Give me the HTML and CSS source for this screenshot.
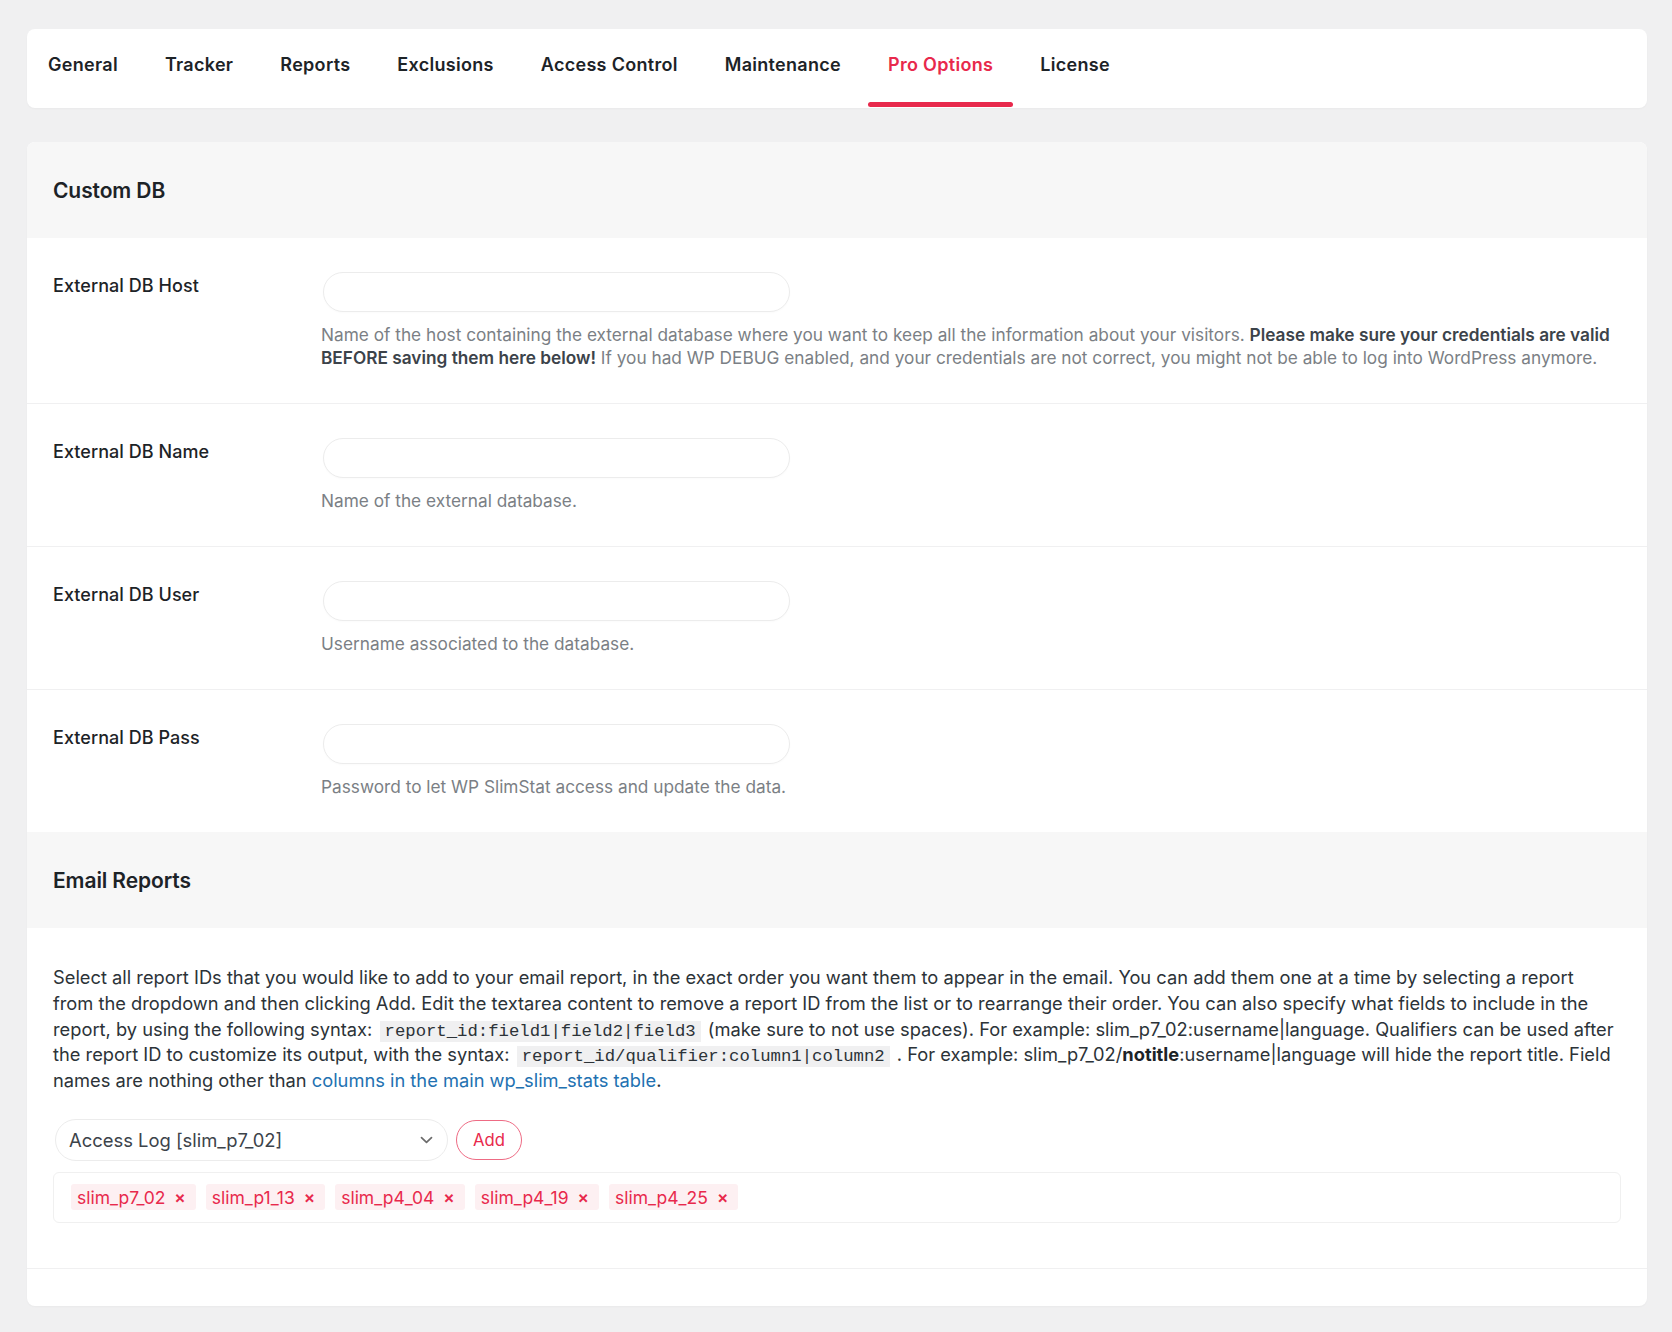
FILE: index.html
```html
<!DOCTYPE html>
<html lang="en">
<head>
<meta charset="utf-8">
<title>Pro Options</title>
<link rel="stylesheet" href="styles.css">
</head>
<body>
<div class="wrap">
  <nav class="tabs">
    <a class="tab">General</a>
    <a class="tab">Tracker</a>
    <a class="tab">Reports</a>
    <a class="tab">Exclusions</a>
    <a class="tab">Access Control</a>
    <a class="tab">Maintenance</a>
    <a class="tab active">Pro Options</a>
    <a class="tab">License</a>
  </nav>

  <div class="card">
    <div class="section-head">Custom DB</div>

    <div class="row">
      <div class="label">External DB Host</div>
      <div class="field">
        <input class="text-input" type="text">
        <p class="desc">Name of the host containing the external database where you want to keep all the information about your visitors. <strong>Please make sure your credentials are valid BEFORE saving them here below!</strong> If you had WP DEBUG enabled, and your credentials are not correct, you might not be able to log into WordPress anymore.</p>
      </div>
    </div>

    <div class="row">
      <div class="label">External DB Name</div>
      <div class="field">
        <input class="text-input" type="text">
        <p class="desc">Name of the external database.</p>
      </div>
    </div>

    <div class="row">
      <div class="label">External DB User</div>
      <div class="field">
        <input class="text-input" type="text">
        <p class="desc">Username associated to the database.</p>
      </div>
    </div>

    <div class="row last">
      <div class="label">External DB Pass</div>
      <div class="field">
        <input class="text-input" type="text">
        <p class="desc">Password to let WP SlimStat access and update the data.</p>
      </div>
    </div>

    <div class="section-head">Email Reports</div>

    <div class="email-body">
      <p class="intro">Select all report IDs that you would like to add to your email report, in the exact order you want them to appear in the email. You can add them one at a time by selecting a report from the dropdown and then clicking Add. Edit the textarea content to remove a report ID from the list or to rearrange their order. You can also specify what fields to include in the report, by using the following syntax: <code>report_id:field1|field2|field3</code> (make sure to not use spaces). For example: slim_p7_02:username|language. Qualifiers can be used after the report ID to customize its output, with the syntax: <code>report_id/qualifier:column1|column2</code> . For example: slim_p7_02/<strong>notitle</strong>:username|language will hide the report title. Field names are nothing other than <a class="link">columns in the main wp_slim_stats table</a>.</p>

      <div class="picker">
        <div class="select">
          <span>Access Log [slim_p7_02]</span>
          <svg class="chev" width="13" height="8" viewBox="0 0 13 8"><path d="M1.5 1.6 L6.5 6.4 L11.5 1.6" fill="none" stroke="#6b6b6b" stroke-width="1.7" stroke-linecap="round" stroke-linejoin="round"/></svg>
        </div>
        <button class="add-btn">Add</button>
      </div>

      <div class="tagbox">
        <span class="tag">slim_p7_02 <b>×</b></span>
        <span class="tag">slim_p1_13 <b>×</b></span>
        <span class="tag">slim_p4_04 <b>×</b></span>
        <span class="tag">slim_p4_19 <b>×</b></span>
        <span class="tag">slim_p4_25 <b>×</b></span>
      </div>
    </div>
    <div class="card-foot"></div>
  </div>
</div>
</body>
</html>
```

FILE: styles.css
```css
* { box-sizing: border-box; }

html, body {
  margin: 0;
  padding: 0;
  background: #f0f0f1;
}

body {
  font-family: Inter, "Noto Sans", "Liberation Sans", sans-serif;
  color: #2c3338;
}

.wrap {
  padding: 29px 25px 26px 27px;
}

.tabs {
  display: flex;
  gap: 7px;
  height: 79px;
  padding-left: 1px;
  background: #fff;
  border-radius: 8px;
  box-shadow: 0 1px 2px rgba(0, 0, 0, 0.03);
}

.tab {
  position: relative;
  display: flex;
  align-items: center;
  padding: 0 20px 8px;
  font-size: 18px;
  font-weight: 600;
  color: #1d2327;
  letter-spacing: 0.3px;
}

.tab.active {
  color: #e8294c;
}

.tab.active::after {
  content: "";
  position: absolute;
  left: 0;
  right: 0;
  bottom: 1px;
  height: 5px;
  border-radius: 3px;
  background: #e8294c;
}

.card {
  margin-top: 34px;
  background: #fff;
  border-radius: 8px;
  overflow: hidden;
  box-shadow: 0 1px 2px rgba(0, 0, 0, 0.03);
}

.section-head {
  display: flex;
  align-items: center;
  height: 96px;
  padding: 0 26px;
  background: #f7f7f7;
  font-size: 21px;
  font-weight: 600;
  color: #1d2327;
  letter-spacing: -0.1px;
}

.row {
  display: grid;
  grid-template-columns: 270px 1fr;
  padding: 34px 26px;
  border-bottom: 1px solid #f0f0f1;
}

.row.last {
  border-bottom: none;
}

.label {
  padding-top: 3px;
  font-size: 18px;
  line-height: 22px;
  font-weight: 500;
  color: #1d2327;
  letter-spacing: 0.05px;
}

.text-input {
  display: block;
  width: 467px;
  height: 40px;
  margin: 0;
  border: 1px solid #ececec;
  border-radius: 20px;
  background: #fff;
  box-shadow: 0 1px 2px rgba(0, 0, 0, 0.02);
  outline: none;
}

.desc {
  margin: 11px 0 0 -2px;
  font-size: 17.25px;
  line-height: 23px;
  color: #7b7f85;
}

.desc strong {
  color: #3c434a;
  font-weight: 600;
}

.email-body {
  padding: 37px 26px 45px;
  border-bottom: 1px solid #f0f0f1;
}

.intro {
  margin: 0 3px 0 0;
  font-size: 18.3px;
  line-height: 25.8px;
  color: #2c3338;
}

.intro code {
  font-family: "Liberation Mono", "DejaVu Sans Mono", monospace;
  font-size: 17.3px;
  line-height: 20px;
  padding: 1px 5px;
  margin: 0 2px;
  background: #f0f0f1;
  color: #2c3338;
}

.intro strong {
  font-weight: 700;
  color: #1d2327;
}

.link {
  color: #2271b1;
}

.picker {
  display: flex;
  align-items: center;
  gap: 8px;
  margin-top: 25px;
  padding-left: 2px;
}

.select {
  display: flex;
  align-items: center;
  justify-content: space-between;
  width: 393px;
  height: 42px;
  padding: 0 14px 0 13px;
  border: 1px solid #ececec;
  border-radius: 21px;
  background: #fff;
  font-size: 18.4px;
  color: #3c434a;
}

.chev {
  display: block;
}

.add-btn {
  height: 40px;
  width: 66px;
  border: 1.5px solid #ee6b84;
  border-radius: 20px;
  background: #fff;
  color: #e8294c;
  font-family: inherit;
  font-size: 16.7px;
  padding: 0;
}

.tagbox {
  display: flex;
  align-items: center;
  gap: 10px;
  height: 51px;
  margin-top: 11px;
  padding: 0 17px;
  border: 1px solid #f0f0f0;
  border-radius: 6px;
}

.tag {
  display: inline-flex;
  align-items: center;
  gap: 9px;
  height: 26px;
  padding: 0 10px 0 6px;
  background: #fdf0f2;
  border-radius: 3px;
  color: #e8294c;
  font-size: 17.5px;
}

.tag b {
  font-weight: 600;
  font-size: 17px;
}

.card-foot {
  height: 37px;
}
```
